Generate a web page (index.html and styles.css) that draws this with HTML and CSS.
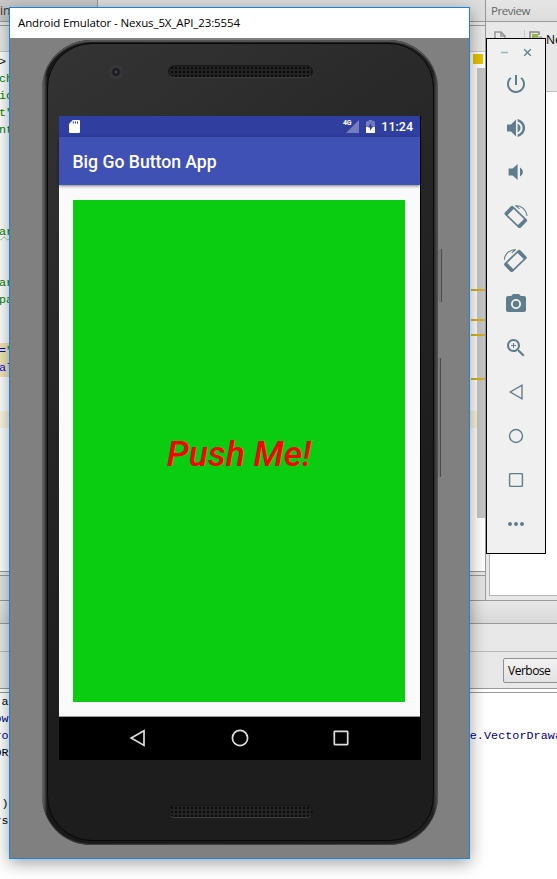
FILE: index.html
```html
<!DOCTYPE html>
<html lang="en">
<head>
<meta charset="utf-8">
<title>Android Emulator</title>
<link rel="stylesheet" href="styles.css">
</head>
<body>
<div class="ide">
  <div class="workspace">
    <section class="editor">
      <div class="tabs"><div class="tab">in</div></div>
      <div class="editor-tools"></div>
      <div class="editor-body">
        <pre class="code"><span class="line dark">&gt;</span><span class="line">ch</span><span class="line">ic</span><span class="line">t"</span><span class="line">nt</span><span class="line"></span><span class="line"></span><span class="line"></span><span class="line"></span><span class="line"></span><span class="line"><u>ar</u></span><span class="line"></span><span class="line"></span><span class="line">ar</span><span class="line">pa</span><span class="line"></span><span class="line"></span><span class="line selected"><b>=</b>"</span><span class="line selected"><b>al</b></span><span class="line"></span><span class="line"></span><span class="line current"></span></pre>
        <div class="gutter">
          <i class="status"></i><div class="scroll"></div>
          <i class="mark m1"></i><i class="mark m2"></i><i class="mark m3"></i><i class="mark m4"></i>
        </div>
      </div>
      <div class="editor-foot"></div>
    </section>
    <section class="preview">
      <div class="preview-title">Preview</div>
      <div class="preview-tools">
        <svg class="doc" width="12" height="14" viewBox="0 0 12 14"><path d="M1 13V1h6l4 4v8M7 1v4h4" fill="none" stroke="#999" stroke-width="1.6"/></svg>
        <i class="divider"></i>
        <svg class="device" width="14" height="14" viewBox="0 0 14 14"><path d="M1 12V1h9v3" fill="none" stroke="#888" stroke-width="1.5"/><path d="M3 3h6v3H6v5H3z" fill="#94b83c"/><path d="M7 12V6h6v6" fill="#ddd" stroke="#999"/></svg>
        <span>Ne</span>
      </div>
      <div class="preview-canvas"></div>
    </section>
  </div>
  <div class="monitor-head"></div>
  <div class="monitor-tabs"></div>
  <div class="monitor-filter"><div class="select">Verbose</div></div>
  <div class="gap"></div>
  <pre class="log"><span>:a</span><span class="blue">ow</span><span class="blue">ro                                                                 e.VectorDrawa</span><span>OR_</span><span> </span><span> </span><span> )</span><span>rs</span></pre>
</div>

<div class="window">
  <div class="window-title">Android Emulator - Nexus_5X_API_23:5554</div>
  <div class="stage">
    <div class="phone">
      <i class="key power"></i><i class="key volume"></i>
      <div class="bezel">
        <div class="top"><i class="camera"></i><i class="speaker"></i></div>
        <div class="screen">
          <div class="statusbar">
            <svg width="11" height="13" viewBox="0 0 11 13"><path d="M3.8 0H10q1 0 1 1v11q0 1-1 1H1q-1 0-1-1V4z" fill="#fff"/><path d="M4.3 1.4v2.2M6.4 1.4v2.2M8.5 1.4v2.2" stroke="#303f9f" stroke-width="1"/></svg>
            <span class="net">4G</span>
            <svg class="signal" width="13" height="13" viewBox="0 0 13 13"><path d="M13 0v13H0z" fill="#747ebe"/></svg>
            <svg class="battery" width="9" height="13" viewBox="0 0 9 13"><path d="M2.5 0h4v1.3H9V7H0V1.3h2.5z" fill="#747ebe"/><path d="M0 7h9v6H0z" fill="#fff"/><path d="M5.2 2.8 2 7.6h2v3.2l3.2-4.6H5.2z" fill="#303f9f"/></svg>
            <span class="clock">11:24</span>
          </div>
          <div class="appbar">Big Go Button App</div>
          <div class="content"><div class="go">Push Me!</div></div>
          <div class="navbar">
            <svg width="18" height="18" viewBox="0 0 18 18"><path d="M15 1.8v14.6L2.2 9.1z"/></svg>
            <svg width="18" height="18" viewBox="0 0 18 18"><circle cx="9" cy="9" r="7.6"/></svg>
            <svg width="18" height="18" viewBox="0 0 18 18"><rect x="2.3" y="2.3" width="13.4" height="13.4" rx=".6"/></svg>
          </div>
        </div>
        <div class="bottom"><i class="speaker"></i></div>
      </div>
    </div>
  </div>
</div>

<div class="toolbar">
  <div class="controls">
    <svg width="9" height="9" viewBox="0 0 9 9"><path d="M1 4.5h7" stroke="#a5b4bb" stroke-width="1.6"/></svg>
    <svg width="9" height="9" viewBox="0 0 9 9"><path d="M1.2 1.2l6.6 6.6M7.8 1.2 1.2 7.8" stroke="#607d8b" stroke-width="1.3"/></svg>
  </div>
  <svg class="tool" viewBox="0 0 24 24"><path d="M13 3h-2v10h2V3zm4.83 2.17-1.42 1.42C17.99 7.86 19 9.81 19 12c0 3.87-3.13 7-7 7s-7-3.13-7-7c0-2.19 1.01-4.14 2.58-5.42L6.17 5.17C4.23 6.82 3 9.26 3 12c0 4.97 4.03 9 9 9s9-4.03 9-9c0-2.74-1.23-5.18-3.17-6.83z"/></svg>
  <svg class="tool" viewBox="0 0 24 24"><path d="M3 8.5v7h4l5 5v-17l-5 5H3zm13.5 3.5c0-1.77-1.02-3.29-2.9-4.4v8.8c1.88-1.1 2.9-2.63 2.9-4.4zM13.6 3.1v2.4c3 .9 5 3.4 5 6.5s-2 5.6-5 6.5v2.4c4.2-.9 7.5-4.5 7.5-8.9s-3.3-8-7.5-8.9z"/></svg>
  <svg class="tool" viewBox="0 0 24 24"><path d="M18.9 12c0-1.77-1.02-3.29-2.9-4.4v8.8c1.88-1.1 2.9-2.63 2.9-4.4zM4.6 8.6v6.8h4l5 4.7V3.9l-5 4.7h-4z"/></svg>
  <svg class="tool" viewBox="0 0 24 24"><g transform="rotate(44 11.8 13)"><path fill-rule="evenodd" d="M2.8 7h18q2 0 2 2v8q0 2-2 2h-18q-2 0-2-2V9q0-2 2-2zM4.6 8.7v8.6H19V8.7z"/></g><path class="arc" d="M11.5 1.5c6 0 10.8 4.3 11.6 10.4M11.5 1.5l4 3.4"/></svg>
  <svg class="tool" viewBox="0 0 24 24"><g transform="matrix(-1 0 0 1 23.2 0)"><g transform="rotate(44 11.8 13)"><path fill-rule="evenodd" d="M2.8 7h18q2 0 2 2v8q0 2-2 2h-18q-2 0-2-2V9q0-2 2-2zM4.6 8.7v8.6H19V8.7z"/></g><path class="arc" d="M11.5 1.5c6 0 10.8 4.3 11.6 10.4M11.5 1.5l4 3.4"/></g></svg>
  <svg class="tool" viewBox="0 0 24 24"><circle cx="12" cy="12" r="3.2"/><path d="M9 2 7.17 4H4c-1.1 0-2 .9-2 2v12c0 1.1.9 2 2 2h16c1.1 0 2-.9 2-2V6c0-1.1-.9-2-2-2h-3.17L15 2H9zm3 15c-2.76 0-5-2.24-5-5s2.24-5 5-5 5 2.24 5 5-2.24 5-5 5z"/></svg>
  <svg class="tool" viewBox="0 0 24 24"><path d="M15.5 14h-.79l-.28-.27C15.41 12.59 16 11.11 16 9.5 16 5.91 13.09 3 9.5 3S3 5.91 3 9.5 5.91 16 9.5 16c1.61 0 3.09-.59 4.23-1.57l.27.28v.79l5 4.99L20.49 19l-4.99-5zm-6 0C7.01 14 5 11.99 5 9.5S7.01 5 9.5 5 14 7.01 14 9.5 11.99 14 9.5 14zm2.5-4h-2v2H9v-2H7V9h2V7h1v2h2v1z"/></svg>
  <svg class="tool line-icon" viewBox="0 0 24 24"><path d="M18 5.2v13.6L6.3 12z"/></svg>
  <svg class="tool line-icon" viewBox="0 0 24 24"><circle cx="12" cy="12" r="6.5"/></svg>
  <svg class="tool line-icon" viewBox="0 0 24 24"><rect x="5.6" y="5.6" width="12.8" height="12.8" rx=".6"/></svg>
  <svg class="tool" viewBox="0 0 24 24"><circle cx="6" cy="12" r="2"/><circle cx="12" cy="12" r="2"/><circle cx="18" cy="12" r="2"/></svg>
</div>
</body>
</html>
```
FILE: styles.css
```css
* { box-sizing: border-box; }
body { margin: 0; width: 557px; height: 879px; overflow: hidden; position: relative; font-family: "Open Sans", sans-serif; }
pre { margin: 0; font: 11.67px/17px "Liberation Mono", monospace; }
i { display: block; }

.ide { display: flex; flex-direction: column; height: 879px; background: #fff; }
.workspace { display: flex; height: 601px; border-bottom: 1px solid #999; }
.editor { width: 485px; display: flex; flex-direction: column; background: #e8e8e8; flex: none; }
.tabs { height: 22px; background: #dedede; border-bottom: 1px solid #999; }
.tab { width: 98px; height: 21px; background: #c8c8c8; border-right: 1px solid #999; font-size: 12px; line-height: 21px; overflow: hidden; color: #333; white-space: nowrap; }
.editor-tools { margin-top: 3px; height: 27px; border-top: 1px solid #999; border-bottom: 1px solid #c8c8c8; }
.editor-body { height: 520px; display: flex; background: #fff; border-bottom: 1px solid #999; }
.code { width: 473px; padding-top: 2px; color: #008000; }
.line { display: block; height: 17px; text-indent: -1px; }
.line b { color: #00f; font-weight: normal; }
.line u { text-decoration: underline wavy #9c9 1px; }
.dark { color: #000; }
.selected { width: 300px; background: #f2e6b5; }
.current { background: #fbf6df; margin-right: -4px; }
.gutter { width: 12px; position: relative; }
.status { width: 10px; height: 10px; margin: 2px 0 4px; background: #e6c200; }
.scroll { width: 8px; height: 450px; margin-left: 4px; background: #c6c6c6; }
.mark { position: absolute; left: -2px; width: 14px; height: 2px; background: #d3b21a; }
.m1 { top: 237px; } .m2 { top: 267px; } .m3 { top: 282px; } .m4 { top: 326px; }
.editor-foot { flex: 1; margin-top: 3px; border-top: 1px solid #999; background: #e4e4e4; }

.preview { flex: 1; display: flex; flex-direction: column; background: #e8e8e8; border-left: 1px solid #999; min-width: 0; }
.preview-title { height: 22px; padding-left: 5px; border-bottom: 1px solid #999; font-size: 11.5px; letter-spacing: -.45px; line-height: 22px; color: #666; background: linear-gradient(#e6e6e6, #dcdcdc); }
.preview-tools { height: 70px; padding: 9px 0 0 8px; display: flex; align-items: flex-start; font-size: 12px; line-height: 18px; border-bottom: 1px solid #c0c0c0; overflow: hidden; color: #000; }
.doc, .device { flex: none; }
.divider { flex: none; width: 1px; height: 18px; margin: -1px 4px 0 18px; background: #c8c8c8; }
.device { margin-right: 3px; }
.preview-canvas { flex: 1; margin: 0 0 4px 3px; background: #fff; border-left: 1px solid #b5b5b5; border-bottom: 1px solid #b5b5b5; }

.monitor-head { height: 23px; background: linear-gradient(#e8e8e8, #d8d8d8); border-bottom: 1px solid #999; }
.monitor-tabs { height: 28px; background: #e8e8e8; border-bottom: 1px solid #bbb; }
.monitor-filter { height: 37px; padding: 6px 0 0 503px; background: #e8e8e8; border-bottom: 1px solid #999; }
.select { height: 25px; width: 80px; padding-left: 4px; border: 1px solid #8f8f8f; border-radius: 2px; font-size: 12px; letter-spacing: -.5px; line-height: 24px; background: linear-gradient(#f2f2f2, #e2e2e2); }
.gap { height: 4px; border-bottom: 1px solid #999; }
.log { flex: 1; padding-top: 1px; text-indent: -5.6px; overflow: hidden; }
.log span { display: block; height: 17px; }
.log .blue { color: #000080; }
.log .blue + .blue { letter-spacing: .1px; }

.window { position: absolute; left: 9px; top: 7px; width: 461px; height: 852px; border: 1px solid #1883d7; background: #808080; box-shadow: 0 4px 16px rgba(0,0,0,.38); }
.window-title { height: 30px; padding-left: 8px; background: #fff; color: #000; font-size: 11.5px; letter-spacing: -.12px; line-height: 30px; white-space: nowrap; }
.stage { padding: 2px 0 0 32px; }
.phone { position: relative; width: 396px; height: 805px; padding: 3px 4px 4px 5px; border-radius: 49px; background: linear-gradient(90deg, #6c6c6c, #444 3px, #181818 5px, #202020 391px, #565454); box-shadow: inset 0 2px 1px #555, inset 0 -1px 1px #444; }
.bezel { height: 798px; padding: 0 12px; border-radius: 45px; border: 1px solid #080808; background: linear-gradient(145deg, #343435, #262626 35%, #1d1d1e 65%, #1d1d1d); }
.top { height: 72px; display: flex; padding: 21px 0 0 49px; }
.camera { width: 14px; height: 14px; border-radius: 50%; background: radial-gradient(circle, #51404e 0 1px, #1b1b20 2px 3px, #38383a 5px 7px); }
.speaker { width: 145px; height: 13px; border-radius: 7px; border: 1px solid #171717; border-bottom-color: #3d3d3d; background: radial-gradient(circle, #0b0b0b 0 .8px, transparent 1.2px) 1px 0 / 4px 4px #222; }
.top .speaker { margin: 0 0 0 45px; }
.screen { width: 362px; margin-left: -1px; height: 644px; border-right: 1px solid #000; color: #fff; font-family: Roboto, sans-serif; display: flex; flex-direction: column; }
.statusbar { height: 21px; display: flex; align-items: center; padding: 0 7px 0 10px; background: #303f9f; }
.net { margin-left: auto; font-size: 7px; font-weight: 700; line-height: 8px; align-self: flex-start; padding-top: 3px; margin-right: -5px; z-index: 1; letter-spacing: -.3px; }
.battery { margin: 0 6px 0 7px; }
.clock { font-size: 12.5px; font-weight: 500; line-height: 21px; }
.appbar { height: 48px; flex: none; padding-left: 13.5px; background: #3f51b5; font-size: 17.6px; font-weight: 500; line-height: 51px; box-shadow: 0 1px 3px rgba(0,0,0,.5); z-index: 1; }
.content { flex: 1; padding: 15px 15px 14px 14px; background: #fafafa; border-bottom: 1px solid #999; }
.go { height: 502px; display: flex; align-items: center; justify-content: center; padding-top: 5px; background: #0acd12; color: #f00; font-size: 35.5px; font-weight: 500; font-style: italic; }
.navbar { height: 43px; display: flex; align-items: center; justify-content: space-between; padding: 0 70px 2px; background: #000; }
.navbar svg { fill: none; stroke: #ddd; stroke-width: 1.7; }
.bottom { padding: 45px 0 0 108px; }
.key { position: absolute; right: -4px; width: 4px; background: #777; border-right: 1px solid #4e4a4a; }
.power { top: 209px; height: 53px; }
.volume { top: 318px; height: 119px; right: -3px; width: 3px; }

.toolbar { position: absolute; left: 486px; top: 38px; width: 60px; height: 516px; border: 1px solid #000; background: #f0f0f0; display: flex; flex-direction: column; align-items: center; }
.controls { width: 58px; height: 33px; flex: none; padding: 9px 13px 0; display: flex; justify-content: space-between; }
.tool { width: 24px; height: 24px; margin-bottom: 20px; flex: none; fill: #607d8b; }
.tool:last-child { margin-bottom: 0; }
.arc { fill: none; stroke: #607d8b; stroke-width: 1.1; }
.line-icon { fill: none; stroke: #607d8b; stroke-width: 1.4; }
```
